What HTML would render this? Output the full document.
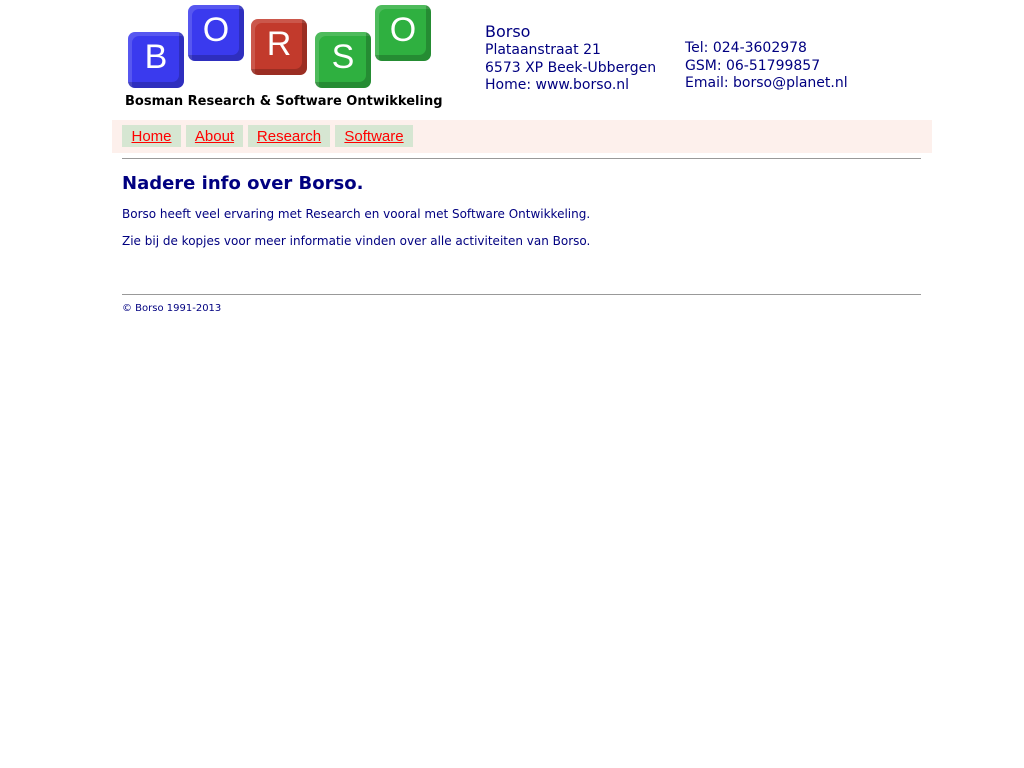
<!DOCTYPE html>
<html><head><meta charset="utf-8"><style>
body{margin:0;background:#fff;font-family:"DejaVu Sans","Liberation Sans",sans-serif;color:#000080;}
.a{position:absolute}
.key{position:absolute;width:56px;height:56px;border-radius:7px;color:#fff;font:34px "Liberation Sans",sans-serif;text-align:center;line-height:50px;box-shadow:inset -5px -6px 0 rgba(0,0,0,.2),inset 4px 4px 0 rgba(255,255,255,.15)}
.b{background:#3a3aee}.r{background:#c23a2c}.g{background:#2fb040}
.nav{position:absolute;left:112px;top:120px;width:820px;height:33px;background:#fdf0ec}
.btn{position:absolute;top:5px;height:22px;background:#d6e6d2;color:#ff0000;text-decoration:underline;font:15px "Liberation Sans",sans-serif;line-height:24px;text-align:center}
hr{position:absolute;margin:0;border:0;border-top:1px solid #999;left:122px;width:799px}
</style></head><body>
<div class="key b" style="left:128px;top:32px">B</div>
<div class="key b" style="left:188px;top:5px">O</div>
<div class="key r" style="left:251px;top:19px">R</div>
<div class="key g" style="left:315px;top:32px">S</div>
<div class="key g" style="left:375px;top:5px">O</div>
<div class="a" style="left:125px;top:94px;font-size:13px;font-weight:bold;color:#000">Bosman Research &amp; Software Ontwikkeling</div>
<div class="a" style="left:485px;top:22px;font-size:16px">Borso</div>
<div class="a" style="left:485px;top:42px;font-size:14px;line-height:17.5px">Plataanstraat 21<br>6573 XP Beek-Ubbergen<br>Home: www.borso.nl</div>
<div class="a" style="left:685px;top:40px;font-size:14px;line-height:17.5px">Tel: 024-3602978<br>GSM: 06-51799857<br>Email: borso@planet.nl</div>
<div class="nav">
<span class="btn" style="left:10px;width:59px">Home</span>
<span class="btn" style="left:74px;width:57px">About</span>
<span class="btn" style="left:136px;width:82px">Research</span>
<span class="btn" style="left:223px;width:78px">Software</span>
</div>
<hr style="top:158px">
<div class="a" style="left:122px;top:173px;font-size:18px;font-weight:bold">Nadere info over Borso.</div>
<div class="a" style="left:122px;top:207px;font-size:12px">Borso heeft veel ervaring met Research en vooral met Software Ontwikkeling.</div>
<div class="a" style="left:122px;top:234px;font-size:12px">Zie bij de kopjes voor meer informatie vinden over alle activiteiten van Borso.</div>
<hr style="top:294px">
<div class="a" style="left:122px;top:303px;font-size:10px">© Borso 1991-2013</div>
</body></html>
